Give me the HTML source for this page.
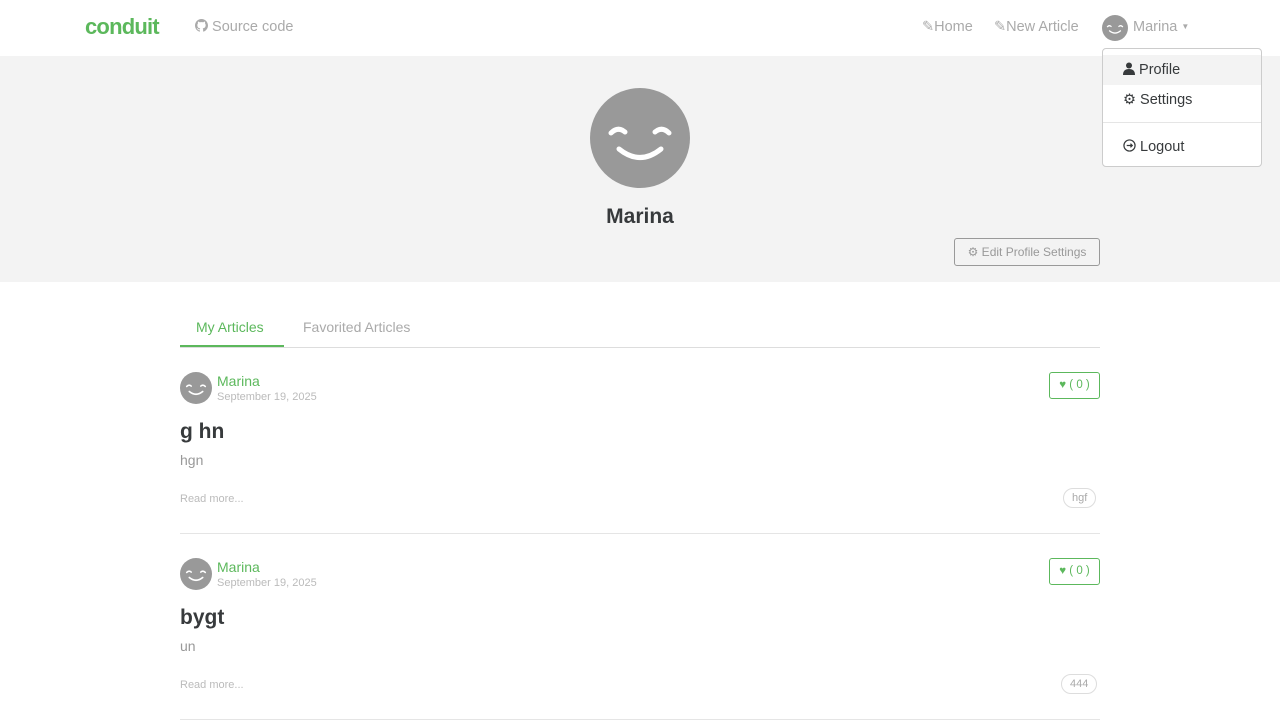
<!DOCTYPE html>
<html><head><meta charset="utf-8"><style>
*{box-sizing:border-box;margin:0;padding:0}
body{width:1280px;height:720px;overflow:hidden;background:#fff;font-family:"Liberation Sans",sans-serif;color:#373a3c;position:relative}
.nav{height:56px;position:relative}
.logo{position:absolute;left:85px;top:14px;color:#5cb85c;font-weight:bold;font-size:22px;letter-spacing:-0.8px}
.src{position:absolute;left:195px;top:19px;color:#aaa;font-size:14.5px}
.navr{position:absolute;top:19px;color:#aaa;font-size:14.5px}
.banner{position:absolute;top:56px;left:0;width:1280px;height:226px;background:#f3f3f3}
.av{position:absolute}
.name{position:absolute;top:205px;width:1280px;text-align:center;font-weight:bold;font-size:21px;color:#373a3c}
.edit{position:absolute;left:954px;top:238px;width:146px;height:28px;border:1px solid #999;border-radius:3px;color:#999;font-size:12px;line-height:26px;text-align:center}
.dd{position:absolute;left:1102px;top:48px;width:160px;height:119px;background:#fff;border:1px solid #ccc;border-radius:4px}
.dd div{position:absolute;left:0;width:158px;font-size:14.5px;color:#373a3c;padding-left:20px}
.tabs{position:absolute;left:180px;top:347px;width:920px;border-top:1px solid #ddd}
.tab{position:absolute;top:319px;font-size:14px}
.art{position:absolute;left:180px;width:920px}
.an{position:absolute;left:37px;top:1px;color:#5cb85c;font-size:14px}
.ad{position:absolute;left:37px;top:19px;color:#bbb;font-size:11px}
.h{position:absolute;left:0;top:48px;font-weight:bold;font-size:21px}
.p{position:absolute;left:0;top:80px;color:#999;font-size:14px}
.rm{position:absolute;left:0;top:121px;color:#bbb;font-size:11px}
.tag{position:absolute;top:116px;height:20px;border:1px solid #ddd;border-radius:10px;color:#aaa;font-size:11px;line-height:19px;padding:0 8px}
.fav{position:absolute;left:869px;top:0;width:51px;height:27px;border:1px solid #5cb85c;border-radius:3px;color:#5cb85c;font-size:11.5px;line-height:25px;text-align:center}
.line{position:absolute;left:0;width:920px;border-top:1px solid #e5e5e5}
</style></head><body>
<svg width="0" height="0" style="position:absolute"><defs><symbol id="sm" viewBox="0 0 100 100"><circle cx="50" cy="50" r="50" fill="#999"/><path d="M21 45 Q28 38 35 44 M65 44 Q72 38 79 45 M29 61 Q50 78 71 61" stroke="#fff" stroke-width="5" fill="none" stroke-linecap="round"/></symbol></defs></svg>
<div class="nav">
<div class="logo">conduit</div>
<div class="src"><svg width="13" height="13" viewBox="0 0 16 16" style="vertical-align:-1px"><path fill="#aaa" d="M8 0C3.6 0 0 3.6 0 8c0 3.5 2.3 6.5 5.5 7.6.4.1.5-.2.5-.4v-1.4c-2.2.5-2.7-1-2.7-1-.4-.9-.9-1.2-.9-1.2-.7-.5.1-.5.1-.5.8.1 1.2.8 1.200.8.7 1.3 1.9.9 2.3.7.1-.5.3-.9.5-1.1-1.8-.2-3.600-.9-3.6-4 0-.9.3-1.6.8-2.1-.1-.2-.4-1 .1-2.1 0 0 .7-.2 2.2.8.6-.2 1.3-.3 2-.3s1.4.1 2 .3c1.5-1 2.2-.8 2.2-.8.4 1.1.2 1.9.1 2.1.5.6.8 1.3.8 2.1 0 3.1-1.9 3.7-3.6 3.9.3.3.5.8.5 1.5v2.2c0 .2.1.5.6.4C13.7 14.5 16 11.5 16 8c0-4.4-3.6-8-8-8z"/></svg> Source code</div>
<div class="navr" style="left:922px">&#9998;Home</div>
<div class="navr" style="left:994px">&#9998;New Article</div>
<svg class="av" style="left:1102px;top:15px" width="26" height="26"><use href="#sm"/></svg>
<div class="navr" style="left:1133px">Marina <span style="font-size:8px;vertical-align:2px">&#9660;</span></div>
</div>
<div class="banner"></div>
<svg class="av" style="left:590px;top:88px" width="100" height="100"><use href="#sm"/></svg>
<div class="name">Marina</div>
<div class="edit">&#9881; Edit Profile Settings</div>
<div class="dd">
<div style="top:6px;height:30px;background:#f3f3f3;line-height:30px"><svg width="12" height="13" viewBox="0 0 12 13" style="vertical-align:-1px"><circle cx="6" cy="3.5" r="3" fill="#373a3c"/><path d="M0 13 Q0 7 6 7 Q12 7 12 13Z" fill="#373a3c"/></svg> Profile</div>
<div style="top:36px;height:30px;line-height:30px">&#9881; Settings</div>
<div style="top:73px;height:0;border-top:1px solid #e5e5e5;padding:0"></div>
<div style="top:83px;height:30px;line-height:30px"><svg width="13" height="13" viewBox="0 0 14 14" style="vertical-align:-1px"><circle cx="7" cy="7" r="6" stroke="#373a3c" stroke-width="1.3" fill="none"/><path d="M4 7h6M8 5l2 2-2 2" stroke="#373a3c" stroke-width="1.3" fill="none"/></svg> Logout</div>
</div>
<div class="tab" style="left:196px;color:#5cb85c">My Articles</div>
<div class="tab" style="left:303px;color:#aaa">Favorited Articles</div>
<div class="tabs"></div>
<div style="position:absolute;left:180px;top:345px;width:104px;height:2px;background:#5cb85c"></div>
<div class="art" style="top:372px">
<svg class="av" style="left:0;top:0" width="32" height="32"><use href="#sm"/></svg>
<div class="an">Marina</div><div class="ad">September 19, 2025</div>
<div class="fav">&#9829; ( 0 )</div>
<div class="h">g hn</div><div class="p">hgn</div>
<div class="rm">Read more...</div><div class="tag" style="left:883px">hgf</div>
<div class="line" style="top:161px"></div>
</div>
<div class="art" style="top:558px">
<svg class="av" style="left:0;top:0" width="32" height="32"><use href="#sm"/></svg>
<div class="an">Marina</div><div class="ad">September 19, 2025</div>
<div class="fav">&#9829; ( 0 )</div>
<div class="h">bygt</div><div class="p">un</div>
<div class="rm">Read more...</div><div class="tag" style="left:881px">444</div>
<div class="line" style="top:161px"></div>
</div>
</body></html>
